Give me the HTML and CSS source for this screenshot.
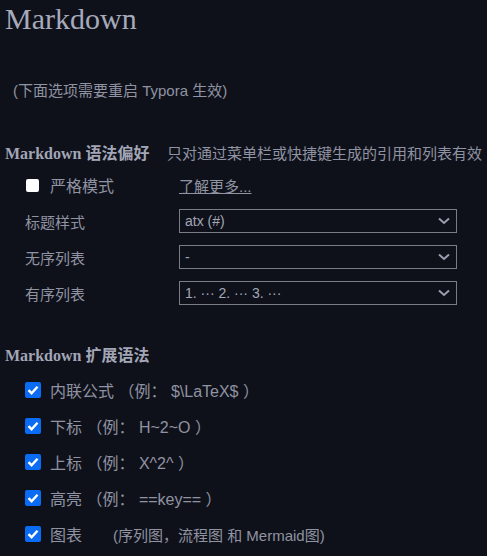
FILE: index.html
```html
<!DOCTYPE html>
<html>
<head>
<meta charset="utf-8">
<link rel="stylesheet" href="styles.css">
</head>
<body>
<h1 class="title">Markdown</h1>
<p class="note">(下面选项需要重启 Typora 生效)</p>

<div class="section-head first">
  <span class="h">Markdown 语法偏好</span>
  <span class="desc">只对通过菜单栏或快捷键生成的引用和列表有效</span>
</div>

<div class="row">
  <label class="check"><span class="box"></span><span>严格模式</span></label>
  <a class="more">了解更多...</a>
</div>
<div class="row">
  <span class="lbl">标题样式</span>
  <div class="select"><span>atx (#)</span><svg class="chev" viewBox="0 0 12 8" width="12" height="8"><path d="M1 1.5 L6 6 L11 1.5" fill="none" stroke="#9a9eae" stroke-width="2"/></svg></div>
</div>
<div class="row">
  <span class="lbl">无序列表</span>
  <div class="select"><span>-</span><svg class="chev" viewBox="0 0 12 8" width="12" height="8"><path d="M1 1.5 L6 6 L11 1.5" fill="none" stroke="#9a9eae" stroke-width="2"/></svg></div>
</div>
<div class="row">
  <span class="lbl">有序列表</span>
  <div class="select"><span>1. ··· 2. ··· 3. ···</span><svg class="chev" viewBox="0 0 12 8" width="12" height="8"><path d="M1 1.5 L6 6 L11 1.5" fill="none" stroke="#9a9eae" stroke-width="2"/></svg></div>
</div>

<div class="section-head second">
  <span class="h">Markdown 扩展语法</span>
</div>

<div class="crow"><span class="cbox"><svg viewBox="0 0 16 16" width="16" height="16"><path d="M3.5 8.2 L6.6 11.2 L12.5 4.8" fill="none" stroke="#fff" stroke-width="2.4"/></svg></span><span>内联公式 （例： $\LaTeX$ ）</span></div>
<div class="crow"><span class="cbox"><svg viewBox="0 0 16 16" width="16" height="16"><path d="M3.5 8.2 L6.6 11.2 L12.5 4.8" fill="none" stroke="#fff" stroke-width="2.4"/></svg></span><span>下标 （例： H~2~O ）</span></div>
<div class="crow"><span class="cbox"><svg viewBox="0 0 16 16" width="16" height="16"><path d="M3.5 8.2 L6.6 11.2 L12.5 4.8" fill="none" stroke="#fff" stroke-width="2.4"/></svg></span><span>上标 （例： X^2^ ）</span></div>
<div class="crow"><span class="cbox"><svg viewBox="0 0 16 16" width="16" height="16"><path d="M3.5 8.2 L6.6 11.2 L12.5 4.8" fill="none" stroke="#fff" stroke-width="2.4"/></svg></span><span>高亮 （例： ==key== ）</span></div>
<div class="crow"><span class="cbox"><svg viewBox="0 0 16 16" width="16" height="16"><path d="M3.5 8.2 L6.6 11.2 L12.5 4.8" fill="none" stroke="#fff" stroke-width="2.4"/></svg></span><span>图表</span><span class="small">(序列图，流程图 和 Mermaid图)</span></div>
</body>
</html>
```
FILE: styles.css
```css
html, body {
  margin: 0;
  padding: 0;
  background: #0f111a;
  height: 100%;
  overflow: hidden;
}
body {
  padding: 0 0 0 5px;
  font-family: "Liberation Sans", Arial, "Noto Sans CJK SC", sans-serif;
  font-size: 16px;
  color: #8f93a2;
}
.title {
  margin: 0;
  padding-top: 1px;
  font-family: "Liberation Serif", "Noto Sans CJK SC", serif;
  font-weight: normal;
  font-size: 30px;
  line-height: 36px;
  color: #a6aabb;
}
.note {
  margin: 44px 0 0 8px;
  font-size: 15px;
  line-height: 20px;
}
.section-head {
  display: flex;
  align-items: center;
  height: 24px;
}
.section-head .h {
  flex: none;
  font-family: "Liberation Serif", "Noto Sans CJK SC", serif;
  font-weight: bold;
  font-size: 16px;
  color: #a2a6b6;
  width: 162px;
}
.section-head .desc {
  font-size: 15px;
  white-space: nowrap;
}
.section-head.first {
  margin-top: 39px;
  margin-bottom: 3px;
}
.section-head.second {
  margin-top: 31px;
  margin-bottom: 6px;
}
.row {
  display: flex;
  align-items: center;
  height: 36px;
  padding-left: 20px;
}
.check {
  display: flex;
  align-items: center;
  width: 154px;
}
.box {
  width: 13px;
  height: 13px;
  background: #fff;
  border-radius: 2px;
  margin: 0 11px 0 1px;
}
.more {
  color: #8f93a2;
  text-decoration: underline;
  font-size: 15px;
}
.lbl {
  width: 154px;
  font-size: 15px;
}
.select {
  width: 265px;
  height: 22px;
  border: 1px solid #7b7d84;
  display: flex;
  align-items: center;
  justify-content: space-between;
  padding: 0 6px 0 5px;
  box-sizing: content-box;
  color: #a2a6b6;
  font-size: 14px;
}
.crow {
  display: flex;
  align-items: center;
  height: 36px;
  padding-left: 20px;
}
.cbox {
  width: 16px;
  height: 16px;
  background: #0a6cf5;
  border-radius: 2px;
  margin-right: 9px;
  display: flex;
}
.small {
  margin-left: 31px;
  font-size: 15px;
}
```
